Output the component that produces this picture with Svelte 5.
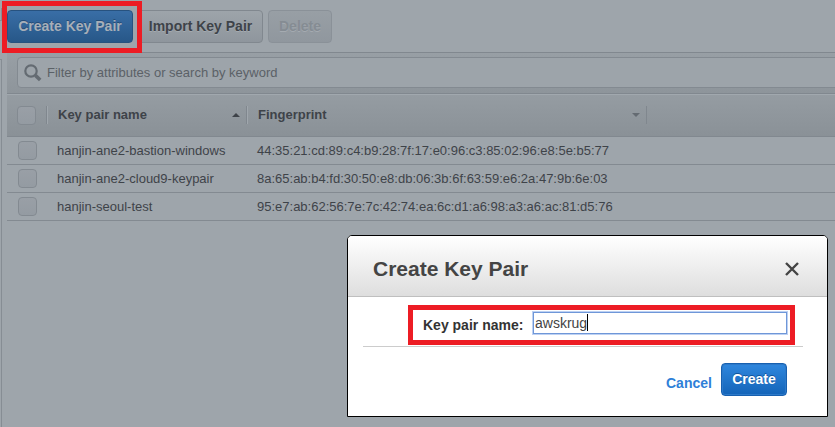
<script>
  const rows = [
    { name: 'hanjin-ane2-bastion-windows', print: '44:35:21:cd:89:c4:b9:28:7f:17:e0:96:c3:85:02:96:e8:5e:b5:77' },
    { name: 'hanjin-ane2-cloud9-keypair', print: '8a:65:ab:b4:fd:30:50:e8:db:06:3b:6f:63:59:e6:2a:47:9b:6e:03' },
    { name: 'hanjin-seoul-test', print: '95:e7:ab:62:56:7e:7c:42:74:ea:6c:d1:a6:98:a3:a6:ac:81:d5:76' }
  ];
  let keyName = 'awskrug';
</script>

<div class="app">
  <div class="rail">
    <div class="rail-top"></div>
    <div class="rail-main"></div>
  </div>
  <main>
    <div class="toolbar">
      <button class="btn primary">Create Key Pair</button>
      <button class="btn import">Import Key Pair</button>
      <button class="btn disabled">Delete</button>
    </div>
    <div class="filter">
      <div class="search">
        <svg width="18" height="18" viewBox="0 0 18 18" fill="none" stroke="#646b72">
          <circle cx="7" cy="7" r="5.7" stroke-width="2.2" />
          <path d="M11.4 11.4 L16.2 16" stroke-width="3.6" />
        </svg>
        <span>Filter by attributes or search by keyword</span>
      </div>
    </div>
    <div class="thead">
      <div class="cell check"><i class="box"></i></div>
      <div class="cell name"><span>Key pair name</span><i class="up"></i></div>
      <div class="cell print"><span>Fingerprint</span><i class="down"></i></div>
      <div class="cell"></div>
    </div>
    {#each rows as row}
      <div class="row">
        <i class="box"></i>
        <span class="rname">{row.name}</span>
        <span class="rprint">{row.print}</span>
      </div>
    {/each}
  </main>

  <section class="modal">
    <header>
      <h2>Create Key Pair</h2>
      <svg width="14" height="14" viewBox="0 0 14 14" stroke="#444" stroke-width="2.4"><path d="M1 1 L13 13 M13 1 L1 13" /></svg>
    </header>
    <div class="field">
      <label for="key">Key pair name:</label>
      <div class="input" id="key">{keyName}<i class="caret"></i></div>
    </div>
    <footer>
      <span class="cancel">Cancel</span>
      <button class="btn create">Create</button>
    </footer>
  </section>

  <div class="mark mark-button"></div>
  <div class="mark mark-field"></div>
</div>

<style>
  .app {
    position: relative;
    display: flex;
    width: 835px;
    height: 427px;
    overflow: hidden;
    background: #9ea5ab;
    color: #3e4349;
    font: 13px 'Liberation Sans', Arial, sans-serif;
    white-space: nowrap;
  }
  .app *, .app { box-sizing: border-box; }
  .rail { width: 7px; flex: none; display: flex; flex-direction: column; justify-content: space-between; padding-top: 8px; }
  .rail-top { width: 2px; height: 13px; border-right: 1px solid #868d94; border-bottom: 1px solid #868d94; }
  .rail-main { width: 2px; height: 368px; border-right: 1px solid #868d94; border-top: 1px solid #868d94; }
  main { flex: 1; min-width: 0; }
  .toolbar { height: 52px; padding-top: 10px; display: flex; gap: 5px; }
  .btn {
    height: 33px;
    padding: 0 0 1px;
    border: 1px solid #81888f;
    border-radius: 4px;
    background: linear-gradient(#9da4aa, #8f969d);
    color: #3e4349;
    font: bold 14px 'Liberation Sans', Arial, sans-serif;
    text-shadow: 0 1px 0 #a5abb1;
  }
  .primary { width: 126px; background: linear-gradient(#396ea6, #275788); border-color: #27527f; color: #a7afb8; text-shadow: 0 -1px 0 #244b76; }
  .import { width: 125px; }
  .disabled { width: 64px; color: #858c93; border-color: #8a9198; background: linear-gradient(#989fa5, #90979e); }
  .filter { height: 42px; border-top: 1px solid #81888f; border-bottom: 1px solid #81888f; background: linear-gradient(#989fa5, #8e959b); padding: 4px 0 0 10px; }
  .search { width: 840px; height: 31px; display: flex; align-items: center; gap: 5px; padding-left: 6px; border: 1px solid #838a91; border-radius: 4px; background: #9da4aa; color: #5b6167; }
  .search svg { margin-top: 1px; }
  .thead { height: 43px; display: flex; align-items: center; padding-bottom: 1px; border-top: 1px solid #a1a8ae; border-bottom: 1px solid #81888f; background: linear-gradient(#959ca2, #8a9197); font-weight: bold; }
  .cell { height: 18px; display: flex; align-items: center; justify-content: space-between; }
  .check { width: 39px; padding-left: 10px; }
  .name, .print, .cell:last-child { border-left: 1px solid #80878e; box-shadow: inset 1px 0 #a0a7ad; }
  .name { width: 200px; padding: 0 6px 0 11px; }
  .print { width: 400px; padding: 0 6px 0 11px; }
  .name span, .print span { margin-top: -1px; }
  .up { border: 4px solid transparent; border-top: 0; border-bottom-color: #3e4349; }
  .down { border: 4px solid transparent; border-bottom: 0; border-top-color: #646b72; }
  .box { display: block; flex: none; width: 19px; height: 19px; border: 1px solid #838a91; border-radius: 4px; background: linear-gradient(#999fa6, #949ba2); }
  .row { height: 28px; display: flex; align-items: center; padding-left: 11px; border-bottom: 1px solid #838a91; }
  .rname { width: 200px; margin-left: 20px; }
  .modal { position: absolute; left: 347px; top: 235px; width: 481px; height: 182px; border: 1px solid #000; border-radius: 5px 5px 0 0; background: #fff; color: #444; overflow: hidden; }
  .modal header { height: 61px; display: flex; align-items: center; justify-content: space-between; padding: 5px 28px 0 25px; background: linear-gradient(#fff, #dedede); border-bottom: 1px solid #bfbfbf; }
  h2 { margin: 0; font-size: 21px; }
  .modal header svg { margin-top: 1px; }
  .field { display: flex; height: 50px; margin: 0 24px 0 15px; padding: 14px 0 0 60px; border-bottom: 1px solid #ccc; }
  label { width: 110px; font-weight: bold; font-size: 14px; line-height: 28px; color: #333; }
  .input { width: 254px; height: 22px; margin-top: 1px; display: flex; align-items: center; padding: 0 0 1px 1px; border: 1px solid #6f97d8; outline: 1px solid #bdd1f3; outline-offset: 0; font-size: 14px; color: #444; }
  .caret { width: 1px; height: 17px; background: #000; }
  footer { display: flex; justify-content: flex-end; padding: 16px 40px 0 0; }
  .cancel { width: 55px; color: #2e7fd8; font-weight: bold; font-size: 14px; line-height: 40px; height: 34px; }
  .create { width: 66px; border-color: #1760b0; background: linear-gradient(#2f87de, #1464b8); color: #fff; text-shadow: 0 -1px 0 #11549b; box-shadow: inset 0 0 0 1px #2c79c9; }
  .mark { position: absolute; border: 5px solid #ed1c24; }
  .mark-button { left: 2px; top: 1px; width: 140px; height: 52px; }
  .mark-field { left: 408px; top: 305px; width: 387px; height: 40px; }
</style>
